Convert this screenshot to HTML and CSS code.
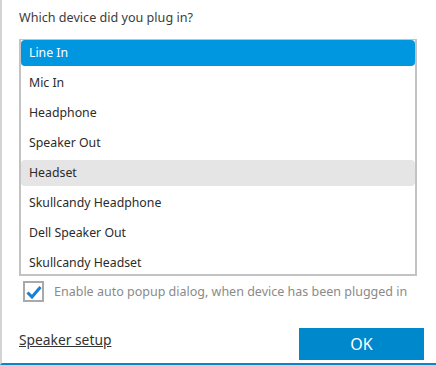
FILE: index.html
```html
<!DOCTYPE html>
<html lang="en">
<head>
    <meta charset="UTF-8">
    <title>Device detection</title>
    <link rel="stylesheet" href="styles.css">
</head>
<body>
    <div class="dialog">
        <p class="question">Which device did you plug in?</p>
        <ul class="device-list">
            <li class="device selected">Line In</li>
            <li class="device">Mic In</li>
            <li class="device">Headphone</li>
            <li class="device">Speaker Out</li>
            <li class="device hover">Headset</li>
            <li class="device">Skullcandy Headphone</li>
            <li class="device">Dell Speaker Out</li>
            <li class="device">Skullcandy Headset</li>
        </ul>
        <label class="auto-popup">
            <span class="checkbox">
                <svg width="16" height="14" viewBox="0 0 16 14">
                    <path d="M1.5 7.5 L6 12 L14.5 2" fill="none" stroke="#1a7fd1" stroke-width="3"/>
                </svg>
            </span>
            Enable auto popup dialog, when device has been plugged in
        </label>
        <div class="footer">
            <a href="#" class="setup-link">Speaker setup</a>
            <button class="ok-button">OK</button>
        </div>
    </div>
</body>
</html>
```

FILE: styles.css
```css
body {
    margin: 0;
    padding: 0;
    background: #fff;
    font-family: "Noto Sans", "Open Sans", sans-serif;
    font-size: 12.3px;
    color: #333;
}

.dialog {
    box-sizing: border-box;
    width: 436px;
    height: 365px;
    border-left: 2px solid #d4d4d4;
    border-bottom: 2px solid #0a86cc;
    padding: 0 19px 0 17px;
    overflow: hidden;
}

.question {
    margin: 0;
    padding-top: 9px;
    height: 30px;
    line-height: 18px;
    font-size: 12.6px;
    color: #3b3b3b;
}

.device-list {
    list-style: none;
    margin: 0;
    padding: 0;
    width: 398px;
    height: 237px;
    box-sizing: border-box;
    border: 2px solid #c3c3c3;
    border-top-width: 1px;
    overflow: hidden;
}

.device {
    height: 26px;
    line-height: 25px;
    margin: 0 0 4px;
    padding-left: 8px;
    border-radius: 4px;
    color: #2b2b2b;
}

.device.selected {
    background: #0096e0;
    color: #fff;
}

.device.hover {
    background: #e5e5e5;
}

.auto-popup {
    display: flex;
    align-items: center;
    gap: 10px;
    height: 21px;
    margin: 5px 0 0 4px;
    font-size: 12.5px;
    white-space: nowrap;
    color: #8a8a8a;
}

.checkbox {
    display: flex;
    align-items: center;
    justify-content: center;
    flex-shrink: 0;
    width: 17px;
    height: 17px;
    border: 2px solid #a9a9a9;
}

.footer {
    display: flex;
    justify-content: space-between;
    align-items: flex-end;
    height: 32px;
    margin-top: 26px;
}

.setup-link {
    color: #333;
    font-size: 13.8px;
    margin-bottom: 11px;
}

.ok-button {
    width: 125px;
    height: 32px;
    margin-right: -7px;
    border: none;
    background: #0088cc;
    color: #fff;
    font-family: inherit;
    font-size: 16px;
}
```
